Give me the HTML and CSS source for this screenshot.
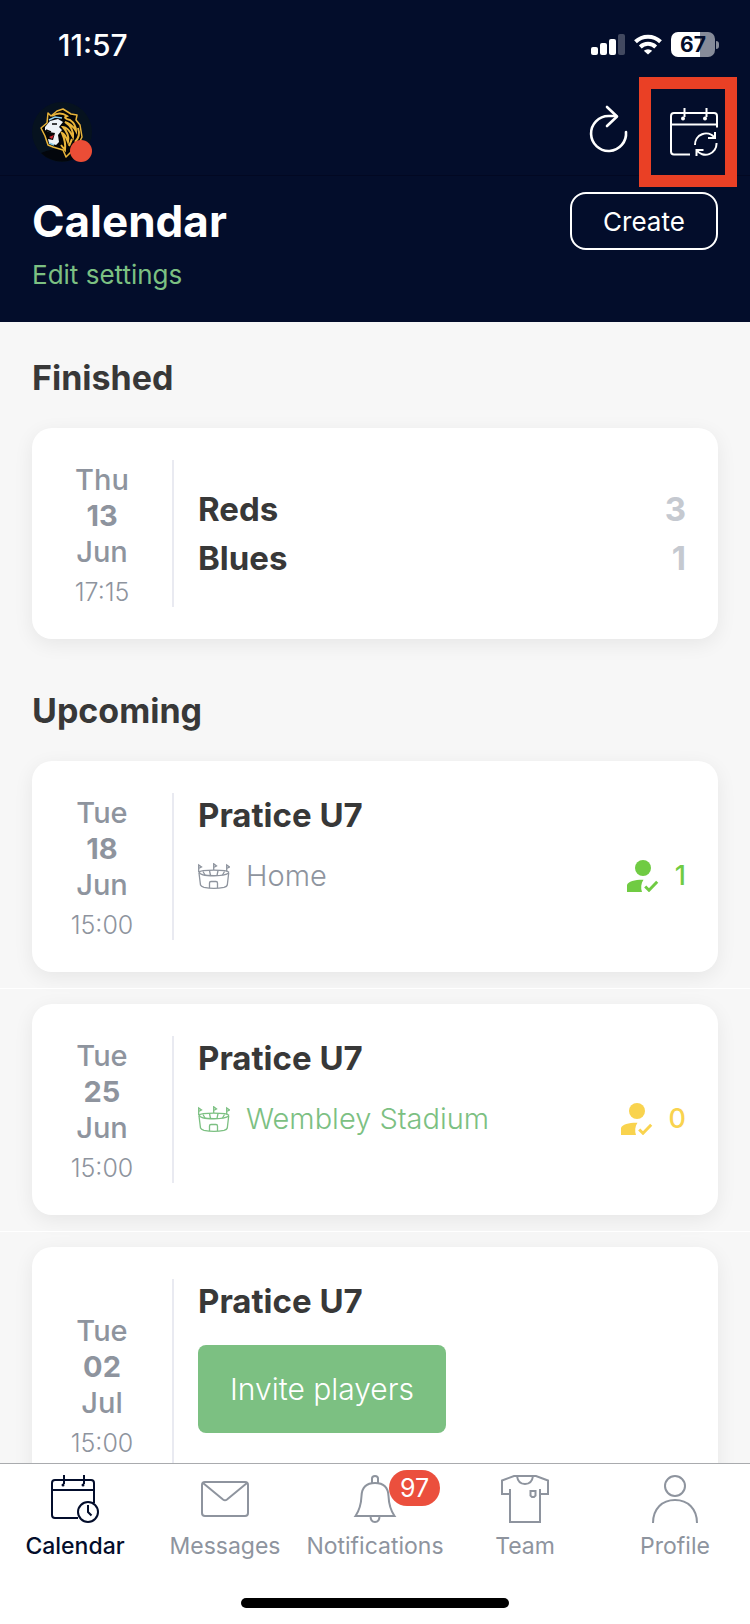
FILE: index.html
```
<!DOCTYPE html>
<html lang="en">
<head>
  <meta charset="UTF-8" />
  <meta name="viewport" content="width=device-width, initial-scale=1" />
  <title>Calendar</title>
  <link rel="stylesheet" href="styles.css">
</head>
<body>

  <!-- Shared icons -->
  <svg class="sprite" aria-hidden="true">
    <symbol id="stadium" viewBox="0 0 32 26">
      <g fill="none" stroke="currentColor" stroke-width="1.300">
        <path d="M1 10 L2.500 22 Q3 23.500 6 24.300 Q16 26.300 26 24.300 Q29 23.500 29.300 22 L30.700 10" />
        <path d="M1 9 C3 6.500 29 6.500 30.700 9 C30 14 2 14 1 9 Z" />
        <path d="M5 8.500 L7 12 M11.500 7.500 L12.500 12.500 M20 7.500 L19 12.500 M26.500 8.500 L24.500 12" />
        <path d="M11.500 25 V20 Q11.500 18.500 13 18.500 H18 Q19.500 18.500 19.500 20 V25" />
        <path d="M.7 9 V2 L3.500 4 L.7 5.500 M15.700 7 V.8 L18.500 3 L15.700 4.500 M28.700 8.500 V2 L31.500 4 L28.700 5.500" />
      </g>
    </symbol>
    <symbol id="attending" viewBox="0 0 32 32">
      <circle cx="16" cy="8" r="8" fill="currentColor" />
      <path d="M0 32 V25 C1 21 9 19.500 16.500 19.700 C14 23 13.500 28 15 32 Z" fill="currentColor" />
      <path d="M18.200 26.500 L22 30.200 L30.200 21.800" fill="none" stroke="currentColor" stroke-width="3" />
    </symbol>
  </svg>

  <div class="app">
    <header class="header">
      <div class="status">
        <span class="clock">11:57</span>
        <div class="status-icons">
          <svg width="34" height="22" viewBox="0 0 34 22" fill="#fff">
            <rect x="0" y="13" width="7" height="8" rx="2" />
            <rect x="9" y="9" width="7" height="12" rx="2" />
            <rect x="18" y="5" width="7" height="16" rx="2" />
            <rect x="27" y="0" width="7" height="21" rx="2" opacity=".25" />
          </svg>
          <svg width="28" height="21" viewBox="0 0 28 21" fill="none" stroke="#fff" stroke-width="4">
            <path d="M1.500 7.800 A18 18 0 0 1 26.500 7.800" />
            <path d="M6.300 13 A11 11 0 0 1 21.700 13" />
            <path d="M14 20.500 L9.800 16.800 A6.200 6.200 0 0 1 18.200 16.800 Z" fill="#fff" stroke="none" />
          </svg>
          <div class="battery"><span class="battery-level">67</span></div>
        </div>
      </div>

      <div class="toolbar">
        <button class="avatar" type="button" aria-label="Switch team">
          <svg width="60" height="60" viewBox="0 0 60 60">
            <circle cx="30" cy="30" r="30" fill="#06121f" />
            <path d="M9 51 A30 30 0 0 0 51 51 Q30 42 9 51 Z" fill="#03060c" />
            <path d="M16 11 L19 14 L25 9 L31 7 L39 12 L45 13 L44 18 L48 23 L50 35 L46 43 L34 55 L31 48 L21 45 L16 43 L13 34 L9 26 L15 21 Z" fill="#050505" stroke="#e9b53a" stroke-width="1.500" stroke-linejoin="round" />
            <path d="M13 25 L18 19 L26 17 L31 20 L27 25 L30 28 L26 33 L27 40 L24 43 L17 41 L16 37 L21 38 L23 31 L17 30 L13 28 Z" fill="#eef3f7" />
            <path d="M17 18 L23 15 L30 16 M17 41 L22 43" stroke="#8fd0ee" stroke-width="1.500" fill="none" />
            <path d="M17 35 L22 33 L20 37 Z" fill="#d02c38" />
            <path d="M20 22 L25 22 M14 28 L19 30" stroke="#050505" stroke-width="1.500" />
            <path d="M20 14 Q28 9 35 14 Q30 16 38 18 Q44 22 44 29 Q40 22 33 20 Q42 26 41 35 Q36 25 31 25 Q38 33 36 40 Q33 32 30 31 Q34 40 33 48 L29 43 M46 26 Q49 34 43 40 M40 37 L37 44" fill="none" stroke="#e9b53a" stroke-width="2" />
          </svg>
          <span class="avatar-dot"></span>
        </button>
        <div class="toolbar-actions">
          <button class="icon-button" type="button" aria-label="Refresh">
            <svg width="40" height="54" viewBox="0 0 40 54" fill="none" stroke="#fff" stroke-width="2.600" stroke-linecap="round" stroke-linejoin="round">
              <path d="M37 27 A17.500 17.500 0 1 1 19.500 11 H27" />
              <path d="M18 2 L28 11.500 L18 21" />
            </svg>
          </button>
          <button class="icon-button highlighted" type="button" aria-label="Sync calendar">
            <svg width="48" height="48" viewBox="0 0 48 48" fill="none" stroke="#fff" stroke-width="2">
              <path d="M20 46.500 H4 Q1 46.500 1 43.500 V8 Q1 5 4 5 H44 Q47 5 47 8 V19.500" />
              <path d="M1 16.500 H47 M14.500 0 V9 M36.500 0 V9" />
              <circle cx="13" cy="10.500" r="2" fill="#fff" stroke="none" />
              <circle cx="35" cy="10.500" r="2" fill="#fff" stroke="none" />
              <path d="M25 37 A11 11 0 0 1 44.500 29.500 M45 24 V30 H38" />
              <path d="M46.500 35 A11 11 0 0 1 26.500 42 M26.500 48 V42 H33.500" />
            </svg>
          </button>
        </div>
      </div>

      <div class="heading">
        <div class="heading-row">
          <h1>Calendar</h1>
          <button class="create" type="button">Create</button>
        </div>
        <a class="settings" href="#">Edit settings</a>
      </div>
    </header>

    <main class="content">
      <h2>Finished</h2>
      <ul class="events">
        <li>
          <article class="card">
            <div class="date">
              <span>Thu</span>
              <strong>13</strong>
              <span>Jun</span>
              <time>17:15</time>
            </div>
            <div class="info match">
              <div class="team"><span>Reds</span><span class="score">3</span></div>
              <div class="team"><span>Blues</span><span class="score">1</span></div>
            </div>
          </article>
        </li>
      </ul>

      <h2>Upcoming</h2>
      <ul class="events">
        <li>
          <article class="card">
            <div class="date">
              <span>Tue</span>
              <strong>18</strong>
              <span>Jun</span>
              <time>15:00</time>
            </div>
            <div class="info">
              <h3>Pratice U7</h3>
              <div class="details">
                <span class="place">
                  <svg width="32" height="26"><use href="#stadium" /></svg>
                  <span>Home</span>
                </span>
                <span class="attending yes">
                  <svg width="32" height="32"><use href="#attending" /></svg>
                  1
                </span>
              </div>
            </div>
          </article>
        </li>
        <li>
          <article class="card">
            <div class="date">
              <span>Tue</span>
              <strong>25</strong>
              <span>Jun</span>
              <time>15:00</time>
            </div>
            <div class="info">
              <h3>Pratice U7</h3>
              <div class="details">
                <a class="place" href="#">
                  <svg width="32" height="26"><use href="#stadium" /></svg>
                  <span>Wembley Stadium</span>
                </a>
                <span class="attending none">
                  <svg width="32" height="32"><use href="#attending" /></svg>
                  0
                </span>
              </div>
            </div>
          </article>
        </li>
        <li>
          <article class="card">
            <div class="date">
              <span>Tue</span>
              <strong>02</strong>
              <span>Jul</span>
              <time>15:00</time>
            </div>
            <div class="info">
              <h3>Pratice U7</h3>
              <button class="invite" type="button">Invite players</button>
            </div>
          </article>
        </li>
      </ul>
    </main>

    <nav class="tabbar">
      <div class="tabs">
        <a class="tab active" href="#">
          <svg width="48" height="48" viewBox="0 0 48 48">
            <path d="M27 43 H4 Q1 43 1 40 V8 Q1 5 4 5 H40 Q43 5 43 8 V28 M1 15 H43 M13 0 V9 M33 0 V9" />
            <circle cx="12" cy="10" r="1.500" fill="currentColor" stroke="none" />
            <circle cx="32" cy="10" r="1.500" fill="currentColor" stroke="none" />
            <circle cx="37" cy="37" r="10" />
            <path d="M37 30 V37 L40.500 40.500" />
          </svg>
          <span>Calendar</span>
        </a>
        <a class="tab" href="#">
          <svg width="48" height="48" viewBox="0 0 48 48">
            <rect x="1" y="7" width="46" height="34" rx="3" />
            <path d="M2 8 L22 24.500 Q24 26 26 24.500 L46 8" />
          </svg>
          <span>Messages</span>
        </a>
        <a class="tab" href="#">
          <div class="tab-icon">
            <svg width="48" height="48" viewBox="0 0 48 48">
              <path d="M21 8 V3.500 Q21 1 24 1 Q27 1 27 3.500 V8" />
              <path d="M4.500 41 Q10 33 10.500 21 Q11 8 24 8 Q37 8 37.500 21 Q38 33 43.500 41 Z" />
              <path d="M19.500 41 Q19.500 47 24 47 Q28.500 47 28.500 41" />
            </svg>
            <span class="badge">97</span>
          </div>
          <span>Notifications</span>
        </a>
        <a class="tab" href="#">
          <svg width="48" height="48" viewBox="0 0 48 48">
            <path d="M9 14 V47 H39 V14 M9 19 H1 V5.500 L13 1 H35 L47 5.500 V19 H39" />
            <path d="M16 1 Q17 9 24 9 Q31 9 32 1" />
            <path d="M29.500 16 H34.500 V20.500 L33 22 H31 L29.500 20.500 Z" />
          </svg>
          <span>Team</span>
        </a>
        <a class="tab" href="#">
          <svg width="48" height="48" viewBox="0 0 48 48">
            <circle cx="24" cy="11" r="10" />
            <path d="M2 48 C2 34 11 25 24 25 C37 25 46 34 46 48" />
          </svg>
          <span>Profile</span>
        </a>
      </div>
      <div class="home-indicator"></div>
    </nav>
  </div>

</body>
</html>
```
FILE: styles.css
```
* {
  box-sizing: border-box;
}
body {
  margin: 0;
  font-family: Inter, "Liberation Sans", sans-serif;
  background: #f7f7f7;
  color: #383838;
}
h1, h2, h3, ul {
  margin: 0;
  padding: 0;
}
button {
  font-family: inherit;
  cursor: pointer;
}
a {
  text-decoration: none;
}
svg {
  display: block;
  flex: none;
}
.sprite {
  position: absolute;
  width: 0;
  height: 0;
}
.app {
  display: flex;
  flex-direction: column;
  height: 100vh;
}

/* Header */
.header {
  flex: none;
  background: #030d2b;
  color: #fff;
}
.status {
  display: flex;
  justify-content: space-between;
  align-items: center;
  height: 89px;
  padding: 0 31px 0 58px;
}
.clock {
  font-size: 30px;
  font-weight: 500;
}
.status-icons {
  display: flex;
  align-items: center;
  gap: 9px;
}
.battery {
  position: relative;
  width: 44px;
  height: 25px;
  margin-right: 4px;
  border-radius: 7px;
  background: linear-gradient(to right, #fff 67%, #868b99 67%);
  color: #030d2b;
  text-align: center;
}
.battery::after {
  content: "";
  position: absolute;
  top: 9px;
  right: -4px;
  width: 3px;
  height: 8px;
  border-radius: 0 3px 3px 0;
  background: #868b99;
}
.battery-level {
  display: block;
  font-size: 21px;
  font-weight: 700;
  line-height: 25px;
}
.toolbar {
  display: flex;
  justify-content: space-between;
  align-items: center;
  height: 87px;
  padding: 0 32px;
  border-bottom: 1px solid #020822;
}
.toolbar-actions {
  display: flex;
  align-items: center;
  gap: 41px;
}
.avatar,
.icon-button {
  position: relative;
  padding: 0;
  border: none;
  background: none;
}
.avatar-dot {
  position: absolute;
  right: 0;
  bottom: 0;
  width: 22px;
  height: 22px;
  border-radius: 50%;
  background: #eb4d36;
}
.highlighted::after {
  content: "";
  position: absolute;
  inset: -31px -19px -31px -31px;
  border: 12px solid #ea4025;
}
.heading {
  padding: 16px 32px 29px;
}
.heading-row {
  display: flex;
  justify-content: space-between;
  align-items: center;
}
h1 {
  font-size: 44px;
  font-weight: 700;
  line-height: 58px;
}
.create {
  width: 148px;
  height: 58px;
  border: 2px solid #fff;
  border-radius: 16px;
  background: none;
  color: #fff;
  font-size: 26px;
}
.settings {
  display: block;
  margin-top: 7px;
  color: #7cc082;
  font-size: 26px;
  line-height: 36px;
}

/* Events */
.content {
  flex: 1;
  min-height: 0;
  overflow: hidden;
}
h2 {
  padding: 34px 32px 12px;
  font-size: 34px;
  font-weight: 700;
  line-height: 44px;
}
.events {
  list-style: none;
}
.events li {
  padding: 16px 32px;
}
.events li + li {
  padding-top: 15px;
  border-top: 1px solid #fff;
}
.card {
  display: flex;
  padding: 32px 32px 32px 0;
  border-radius: 20px;
  background: #fff;
  box-shadow: 0 5px 20px rgba(0, 0, 0, 0.07);
}
.date {
  display: flex;
  flex: none;
  flex-direction: column;
  justify-content: center;
  width: 142px;
  padding-top: 2px;
  border-right: 2px solid #e9eaf1;
  color: #8e949e;
  font-size: 29px;
  font-weight: 500;
  line-height: 36px;
  text-align: center;
}
.date strong {
  font-weight: 700;
}
.date time {
  margin-top: 8px;
  font-size: 25px;
  font-weight: 300;
  line-height: 29px;
}
.info {
  flex: 1;
  padding-left: 24px;
}
.match {
  display: flex;
  flex-direction: column;
  justify-content: center;
}
.team {
  display: flex;
  justify-content: space-between;
  font-size: 33px;
  font-weight: 700;
  line-height: 49px;
}
.score {
  color: #c5c9d0;
}
h3 {
  margin-bottom: 22px;
  font-size: 33px;
  font-weight: 700;
  line-height: 44px;
}
.details {
  display: flex;
  justify-content: space-between;
  align-items: center;
  height: 34px;
}
.place {
  display: flex;
  align-items: center;
  gap: 16px;
  color: #8e949e;
  font-size: 29px;
  font-weight: 300;
  line-height: 36px;
}
a.place {
  color: #7cc082;
}
.attending {
  display: flex;
  align-items: center;
  gap: 16px;
  font-size: 27px;
  font-weight: 500;
  line-height: 36px;
}
.yes {
  color: #70cb43;
}
.none {
  color: #f9d34e;
}
.invite {
  display: block;
  width: 248px;
  height: 88px;
  margin-bottom: 56px;
  border: none;
  border-radius: 8px;
  background: #7cc082;
  color: #fff;
  font-size: 30px;
  font-weight: 300;
}

/* Tab bar */
.tabbar {
  flex: none;
  padding: 11px 0 16px;
  border-top: 1px solid #a9abae;
  background: #fff;
}
.tabs {
  display: grid;
  grid-template-columns: repeat(5, 1fr);
}
.tab {
  display: flex;
  flex-direction: column;
  align-items: center;
  gap: 9px;
  color: #8e949e;
  font-size: 23px;
  line-height: 28px;
}
.tab svg {
  fill: none;
  stroke: currentColor;
  stroke-width: 2;
}
.tab.active {
  color: #030d2b;
  font-weight: 500;
}
.tab-icon {
  position: relative;
}
.badge {
  position: absolute;
  top: -5px;
  left: 38px;
  min-width: 51px;
  border-radius: 18px;
  background: #eb4f3d;
  color: #fff;
  font-size: 25px;
  line-height: 36px;
  text-align: center;
}
.home-indicator {
  width: 268px;
  height: 10px;
  margin: 38px auto 0;
  border-radius: 5px;
  background: #000;
}
```
